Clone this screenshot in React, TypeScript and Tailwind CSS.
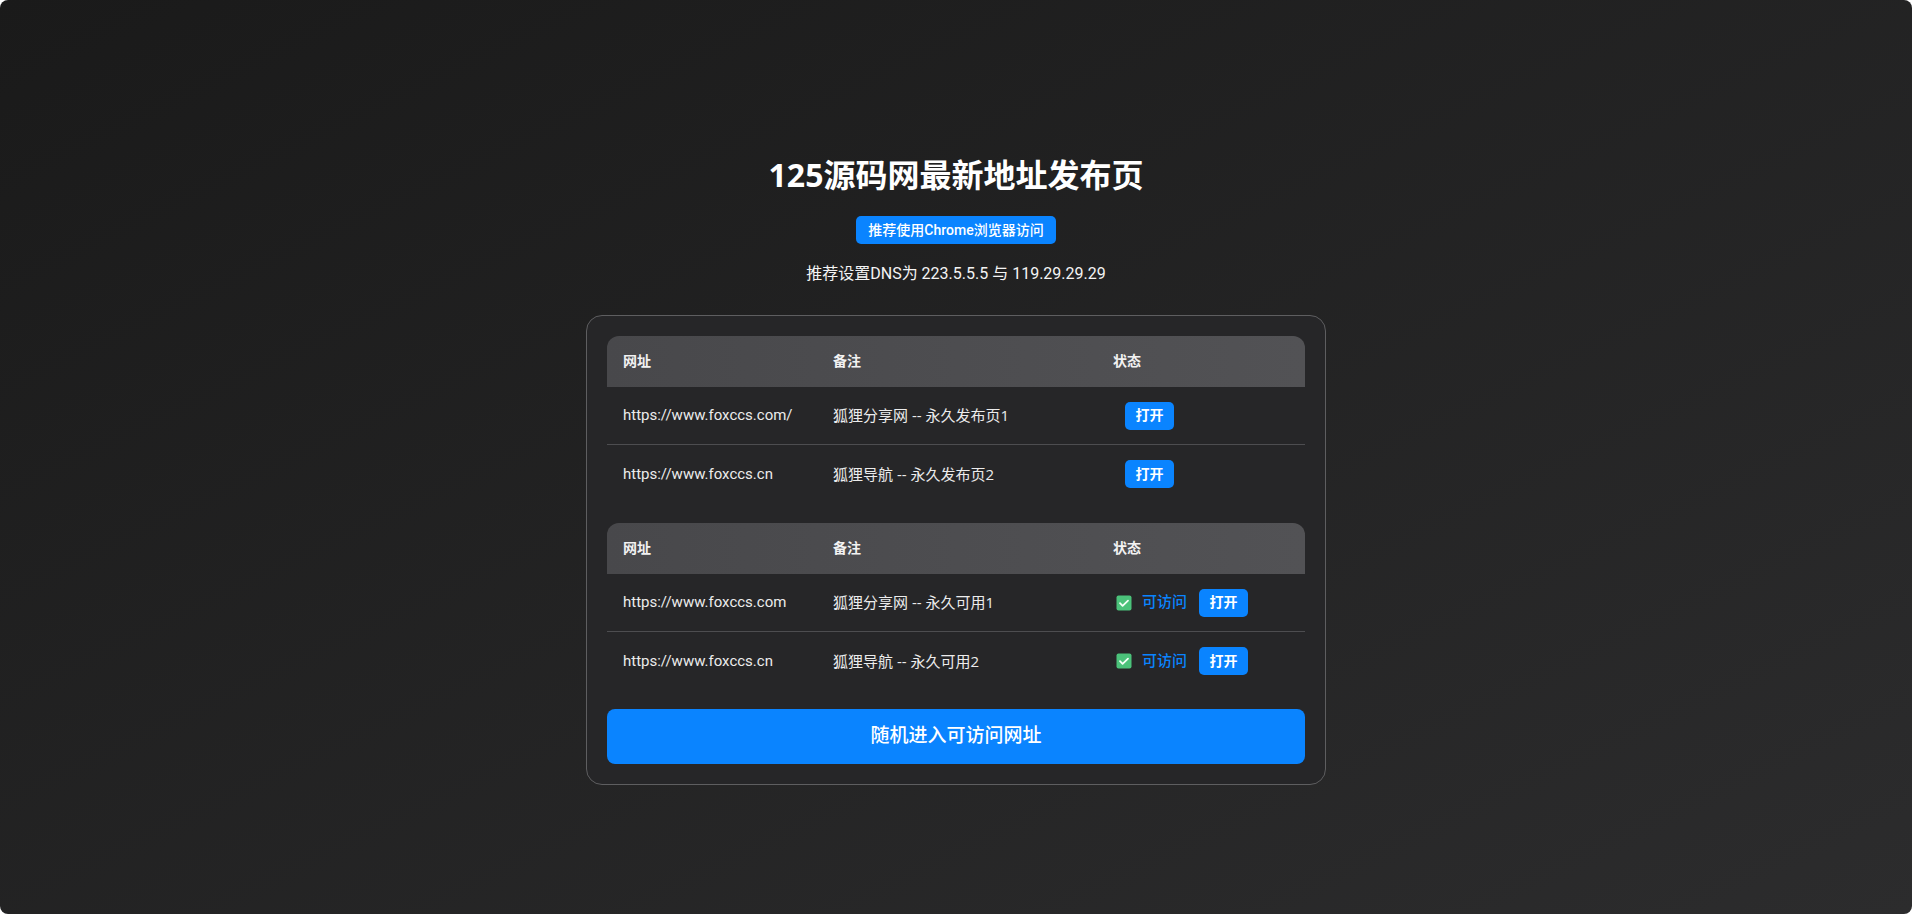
import { Fragment } from "react";

type Site = {
  url: string;
  note: string;
  ok?: boolean;
};

const publishPages: Site[] = [
  { url: "https://www.foxccs.com/", note: "狐狸分享网 -- 永久发布页1" },
  { url: "https://www.foxccs.cn", note: "狐狸导航 -- 永久发布页2" },
];

const mirrors: Site[] = [
  { url: "https://www.foxccs.com", note: "狐狸分享网 -- 永久可用1", ok: true },
  { url: "https://www.foxccs.cn", note: "狐狸导航 -- 永久可用2", ok: true },
];

const openSans = { fontFamily: '"Open Sans", "Noto Sans CJK SC", sans-serif' };

const CheckMark = () => (
  <svg width="16" height="16" viewBox="0 0 16 16" className="shrink-0">
    <rect x="0.5" y="0.5" width="15" height="15" rx="2" fill="#4bc27a" />
    <path d="M4 8.2l2.6 2.6L12 5.6" fill="none" stroke="#f4fff7" strokeWidth="1.8" strokeLinecap="round" strokeLinejoin="round" />
  </svg>
);

const OpenButton = ({ className = "" }: { className?: string }) => (
  <button className={`h-[28px] w-[49px] rounded-[5px] bg-[#0a84ff] text-[14px] font-bold text-white ${className}`}>
    打开
  </button>
);

const SiteTable = ({ rows, withStatus }: { rows: Site[]; withStatus?: boolean }) => (
  <div className="w-full">
    <div className="grid h-[51px] grid-cols-[210px_280px_210px] items-center rounded-t-xl bg-gradient-to-r from-[#48484b] to-[#525255] text-[14px] font-bold text-[#f2f2f2]">
      <div className="pl-4">网址</div>
      <div className="pl-4">备注</div>
      <div className="pl-4">状态</div>
    </div>
    {rows.map((r, i) => (
      <Fragment key={r.url + i}>
        <div
          className={`grid h-[58px] grid-cols-[210px_280px_210px] items-center text-[15px] text-[#ececec] ${
            i < rows.length - 1 ? "border-b border-[#4d4d50]" : ""
          }`}
        >
          <div className="pl-4">{r.url}</div>
          <div className="pl-4" style={openSans}>
            {r.note}
          </div>
          <div className="flex items-center pl-[19px]">
            {withStatus ? (
              <>
                <CheckMark />
                <span className="ml-[10px] font-medium text-[#0a84ff]">可访问</span>
                <OpenButton className="ml-[12px]" />
              </>
            ) : (
              <OpenButton className="ml-[9px]" />
            )}
          </div>
        </div>
      </Fragment>
    ))}
  </div>
);

export default function App() {
  return (
    <div
      className="flex h-[914px] w-full flex-col items-center overflow-hidden rounded-lg bg-gradient-to-br from-[#1a1a1a] to-[#2c2c2d] pt-[152px]"
      style={{ fontFamily: 'Roboto, "Noto Sans CJK SC", sans-serif' }}
    >
      <h1 className="text-[32px] font-bold leading-[45px] text-white" style={openSans}>
        125源码网最新地址发布页
      </h1>
      <div className="mt-[19px] flex h-[28px] items-center rounded-[5px] bg-[#0a84ff] px-[12px] text-[14px] font-medium text-white">
        推荐使用Chrome浏览器访问
      </div>
      <p className="mt-[18px] text-[16px] leading-[24px] text-[#f4f4f4]">
        推荐设置DNS为 223.5.5.5 与 119.29.29.29
      </p>

      <div className="mt-[29px] w-[740px] rounded-2xl border border-[#5e5e60] bg-[#262628] p-5">
        <SiteTable rows={publishPages} />
        <div className="mt-5">
          <SiteTable rows={mirrors} withStatus />
        </div>
        <button className="mt-[19px] h-[55px] w-full rounded-lg bg-[#0a84ff] text-[19px] font-medium text-white">
          随机进入可访问网址
        </button>
      </div>
    </div>
  );
}
